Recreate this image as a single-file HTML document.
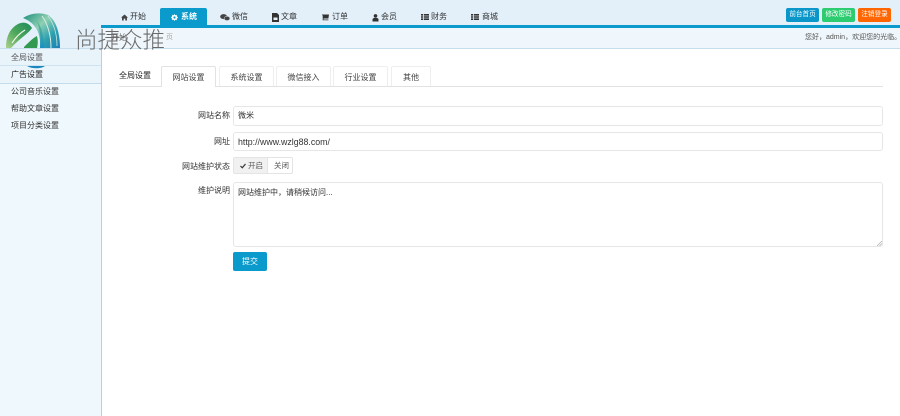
<!DOCTYPE html>
<html lang="zh">
<head>
<meta charset="utf-8">
<title>网站设置</title>
<style>
html,body{margin:0;padding:0;width:900px;height:416px;overflow:hidden;background:#fff;font-family:"Liberation Sans","Noto Sans CJK SC",sans-serif;color:#444}
*{box-sizing:border-box}
div,span,a,svg{position:absolute}
#wrap{left:0;top:0;width:900px;height:416px;overflow:hidden;background:#fff;filter:blur(.3px)}
.t{white-space:nowrap;font-size:8px;line-height:12px}
#head{left:0;top:0;width:900px;height:26px;background:#e3f0fa}
#headl{left:0;top:0;width:102px;height:49px;background:#e3f0fa}
#bar{left:101px;top:25px;width:799px;height:3px;background:#0a9acb}
#crumb{left:101px;top:28px;width:799px;height:21px;background:#eff7fc;border-bottom:1px solid #c5dded}
#side{left:0;top:48px;width:102px;height:368px;background:#eff8fd;border-right:1px solid #b3d2e6}
.row{left:0;width:101px;height:18px}
.nav{top:11px;color:#333}
#active{left:160px;top:8px;width:47px;height:18px;background:#0a9acb;border-radius:2px 2px 0 0}
.btn{top:8px;width:33px;height:14px;border-radius:2px;color:#fff;font-size:6.6px;line-height:14px;text-align:center}
.tab{top:66px;height:21px;background:#fff;border:1px solid #eee;border-bottom:0;border-radius:2px 2px 0 0;font-size:8px;line-height:21px;text-align:center;color:#444}
.inp{left:233px;width:650px;background:#fff;border:1px solid #e6e6e6;border-radius:3px}
.lab{left:130px;width:100px;text-align:right;font-size:8px;line-height:12px;color:#333}
</style>
</head>
<body>
<div id="wrap">
<div id="head"></div>
<div id="headl"></div>

<svg style="left:0;top:0" width="70" height="70" viewBox="0 0 70 70">
<defs>
<linearGradient id="g1" x1="0" y1="1" x2="1" y2="0"><stop offset="0" stop-color="#a9d08c"/><stop offset=".5" stop-color="#4aa65a"/><stop offset="1" stop-color="#1f8a5c"/></linearGradient>
<linearGradient id="g2" x1="0" y1="0" x2="1" y2="1"><stop offset="0" stop-color="#1c8f7a"/><stop offset=".4" stop-color="#8fd0b4"/><stop offset=".7" stop-color="#2c9fb0"/><stop offset="1" stop-color="#1a7fb8"/></linearGradient>
<linearGradient id="g3" x1="0" y1="0" x2="0" y2="1"><stop offset="0" stop-color="#5fb98a"/><stop offset="1" stop-color="#1690c4"/></linearGradient>
</defs>
<path d="M6 48C6 38 9 29 18 24C24 21 29 23 32 28C28 34 20 38 11 48Z" fill="url(#g1)"/>
<path d="M12 43C16 37 20 33 25 30" stroke="#eef6e8" stroke-width="1.2" fill="none"/>
<path d="M23 18C30 13 41 12 48 15C56 20 60 33 60 48H40C41 36 38 24 23 18Z" fill="url(#g2)"/>
<path d="M36 20C42 26 44 38 44 48H40C41 36 40 27 36 20Z" fill="url(#g3)"/>
<path d="M42 16C48 24 51 36 51 48" stroke="#d9efe3" stroke-width="1" fill="none"/>
<path d="M48 16C54 24 57 34 57 46" stroke="#c8e6dc" stroke-width=".8" fill="none"/>
<path d="M24 47C29 42 33 38 37 36C38 40 38 44 37 48H24Z" fill="#2f9a50"/>
</svg>

<div id="bar"></div>
<div id="crumb"></div>
<div class="t" style="left:111px;top:32px;color:#666;font-size:8px">开始</div>
<div class="t" style="left:166px;top:32px;color:#aaa;font-size:7px">页</div>
<div class="t" style="left:805px;top:32px;color:#555;font-size:7px">您好，admin，欢迎您的光临。</div>

<div id="side"></div>
<div class="row" style="top:48px;height:18px;background:#e8f3fa;border-top:1px solid #c5dded;border-bottom:1px solid #d0e3f0"></div>
<div class="row" style="top:66px;height:18px;background:#eaf5fb;border-bottom:1px solid #c3dbea"></div>
<svg style="left:26px;top:66px" width="20" height="3" viewBox="0 0 20 3"><path d="M1 0H19C15 3 6 3 1 0Z" fill="#1c86c0"/></svg>
<div class="t" style="left:11px;top:52px;color:#555">全局设置</div>
<div class="t" style="left:11px;top:69px;color:#222">广告设置</div>
<div class="t" style="left:11px;top:86px;color:#333">公司音乐设置</div>
<div class="t" style="left:11px;top:103px;color:#333">帮助文章设置</div>
<div class="t" style="left:11px;top:120px;color:#333">项目分类设置</div>

<div class="t" style="left:75px;top:30px;font-size:22.5px;line-height:22px;color:#6a6a6a;font-weight:300;z-index:5">尚捷众推</div>

<div id="active"></div>
<svg style="left:121px;top:14px" width="7" height="7" viewBox="0 0 7 7"><path d="M3.5 .5L7 3.6H6V6.5H4.3V4.6H2.7V6.5H1V3.6H0Z" fill="#444"/></svg>
<span class="t nav" style="left:130px">开始</span>
<svg style="left:171px;top:14px" width="7" height="7" viewBox="0 0 7 7"><path d="M3.5 0L4.3 1.2 5.7 .8 5.9 2.2 7 3.5 5.9 4.8 5.7 6.2 4.3 5.8 3.5 7 2.7 5.8 1.3 6.2 1.1 4.8 0 3.5 1.1 2.2 1.3 .8 2.7 1.2Z" fill="#fff"/><circle cx="3.5" cy="3.5" r="1.1" fill="#0a9acb"/></svg>
<span class="t nav" style="left:181px;color:#fff;font-weight:bold">系统</span>
<svg style="left:220px;top:14px" width="10" height="7" viewBox="0 0 10 7"><ellipse cx="3.6" cy="2.6" rx="3.4" ry="2.5" fill="#444"/><ellipse cx="7" cy="4.4" rx="2.9" ry="2.2" fill="#444" stroke="#e3f0fa" stroke-width=".5"/></svg>
<span class="t nav" style="left:232px">微信</span>
<svg style="left:272px;top:13px" width="7" height="9" viewBox="0 0 7 9"><path d="M0 0H5L7 2V9H0Z" fill="#333"/><rect x="1.5" y="4.5" width="4" height="2.5" fill="#e3f0fa"/></svg>
<span class="t nav" style="left:281px">文章</span>
<svg style="left:322px;top:14px" width="7" height="8" viewBox="0 0 7 8"><path d="M0 .5H7L6.4 4.5H1.5V5.5H6.4V6.2H.7V1.2H0Z" fill="#333"/></svg>
<span class="t nav" style="left:332px">订单</span>
<svg style="left:372px;top:14px" width="7" height="8" viewBox="0 0 7 8"><circle cx="3.5" cy="1.9" r="1.8" fill="#333"/><path d="M.5 7.5V5.5C.5 4.4 1.5 3.9 3.5 3.9S6.5 4.4 6.5 5.5V7.5Z" fill="#333"/></svg>
<span class="t nav" style="left:381px">会员</span>
<svg style="left:421px;top:14px" width="8" height="6" viewBox="0 0 8 6"><path d="M0 0H2V1.6H0ZM2.8 0H8V1.6H2.8ZM0 2.2H2V3.8H0ZM2.8 2.2H8V3.8H2.8ZM0 4.4H2V6H0ZM2.8 4.4H8V6H2.8Z" fill="#333"/></svg>
<span class="t nav" style="left:431px">财务</span>
<svg style="left:471px;top:14px" width="8" height="6" viewBox="0 0 8 6"><path d="M0 0H2V1.6H0ZM2.8 0H8V1.6H2.8ZM0 2.2H2V3.8H0ZM2.8 2.2H8V3.8H2.8ZM0 4.4H2V6H0ZM2.8 4.4H8V6H2.8Z" fill="#333"/></svg>
<span class="t nav" style="left:482px">商城</span>

<div class="btn" style="left:786px;background:#0a96c9">前台首页</div>
<div class="btn" style="left:822px;background:#2ecc71">修改密码</div>
<div class="btn" style="left:858px;background:#ff6600">注销登录</div>

<div style="left:119px;top:86px;width:764px;height:1px;background:#e2e2e2"></div>
<div class="t" style="left:119px;top:70px;color:#222">全局设置</div>
<div class="tab" style="left:161px;width:55px;height:21px;border-color:#e2e2e2">网站设置</div>
<div class="tab" style="left:219px;width:55px;height:20px">系统设置</div>
<div class="tab" style="left:276px;width:55px;height:20px">微信接入</div>
<div class="tab" style="left:333px;width:55px;height:20px">行业设置</div>
<div class="tab" style="left:391px;width:40px;height:20px">其他</div>

<div class="lab" style="top:110px">网站名称</div>
<div class="inp" style="top:106px;height:20px"></div>
<div class="t" style="left:238px;top:110px;color:#333">微米</div>

<div class="lab" style="top:136px">网址</div>
<div class="inp" style="top:132px;height:19px"></div>
<div class="t" style="left:238px;top:136px;color:#333;font-size:8.8px">http://www.wzlg88.com/</div>

<div class="lab" style="top:161px">网站维护状态</div>
<div style="left:233px;top:157px;width:60px;height:17px;border:1px solid #e4e4e4;border-radius:2px;background:#fff"></div>
<div style="left:234px;top:158px;width:34px;height:15px;background:#f1f1f1;border-right:1px solid #e4e4e4"></div>
<svg style="left:240px;top:163px" width="6" height="6" viewBox="0 0 6 6"><path d="M.5 3L2.3 4.8 5.5 1" stroke="#333" stroke-width="1.2" fill="none"/></svg>
<div class="t" style="left:248px;top:160px;color:#555;font-size:7.5px">开启</div>
<div class="t" style="left:274px;top:160px;color:#555;font-size:7.5px">关闭</div>

<div class="lab" style="top:185px">维护说明</div>
<div class="inp" style="top:182px;height:65px"></div>
<div class="t" style="left:238px;top:187px;color:#333">网站维护中，请稍候访问...</div>
<svg style="left:877px;top:241px" width="5" height="5" viewBox="0 0 5 5"><path d="M0 5L5 0M2.5 5L5 2.5" stroke="#aaa" stroke-width=".7"/></svg>

<div style="left:233px;top:252px;width:34px;height:19px;background:#0a9acb;border-radius:2px;color:#fff;font-size:8px;line-height:19px;text-align:center">提交</div>
</div>
</body>
</html>
